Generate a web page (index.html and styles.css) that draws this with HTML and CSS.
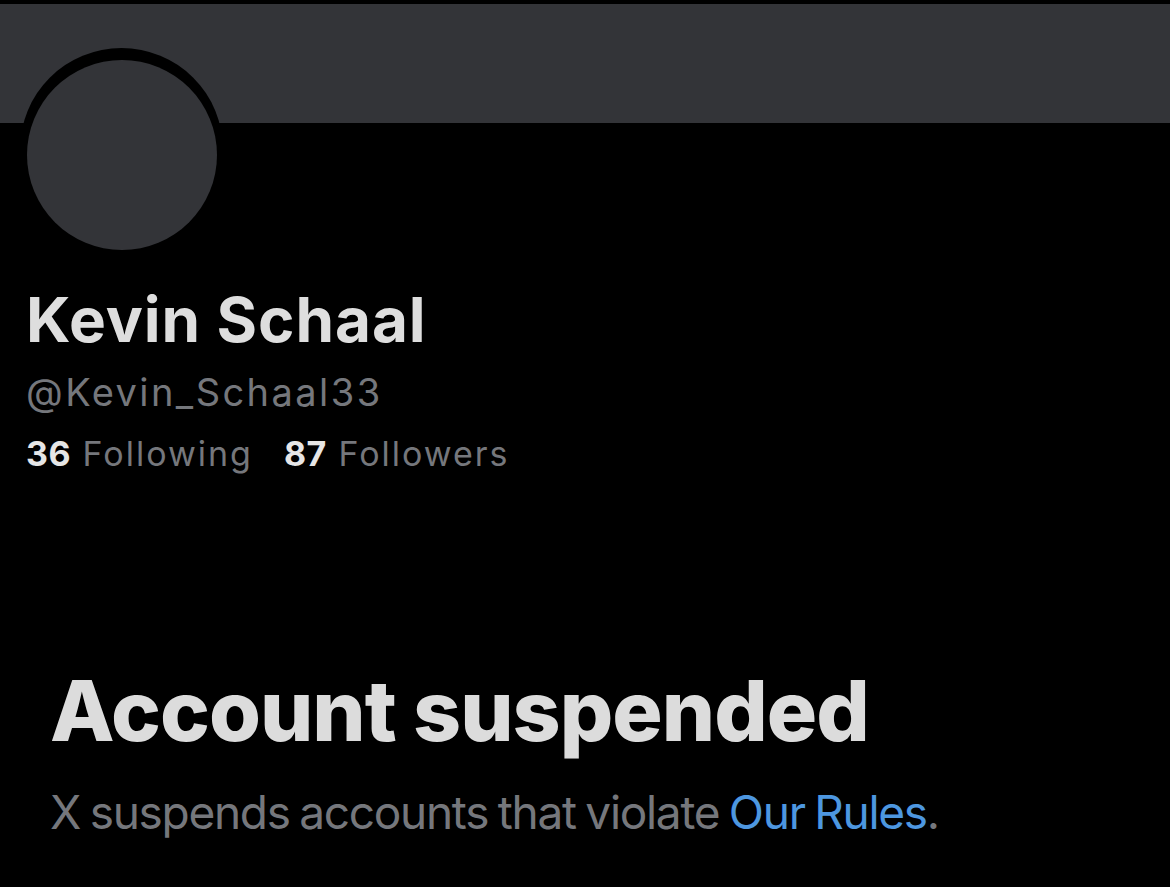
FILE: index.html
```html
<!DOCTYPE html>
<html>
<head>
<meta charset="utf-8">
<link rel="stylesheet" href="styles.css">
</head>
<body>
<div class="page">
  <div class="topstrip"></div>
  <div class="banner"></div>
  <div class="avatar-ring"><div class="avatar"></div></div>
  <div class="profile">
    <div class="name">Kevin Schaal</div>
    <div class="handle">@Kevin_Schaal33</div>
    <div class="stats">
      <span class="stat"><b>36</b> Following</span>
      <span class="stat"><b>87</b> Followers</span>
    </div>
  </div>
  <div class="suspended">
    <div class="title">Account suspended</div>
    <div class="desc">X suspends accounts that violate <a href="#" class="link">Our Rules</a>.</div>
  </div>
</div>
</body>
</html>
```
FILE: styles.css
```css
html, body {
  margin: 0;
  padding: 0;
  background: #000;
}
.page {
  width: 1170px;
  height: 887px;
  overflow: hidden;
  background: #000;
  font-family: Inter, "Noto Sans", sans-serif;
}
.topstrip {
  height: 4px;
  background: #000;
}
.banner {
  height: 119px;
  background: #333438;
}
.avatar-ring {
  margin-top: -75px;
  margin-left: 20px;
  width: 203px;
  height: 203px;
  border-radius: 50%;
  background: #000;
  box-sizing: border-box;
  padding: 12px 0 0 7px;
}
.avatar {
  width: 190px;
  height: 190px;
  border-radius: 50%;
  background: #333438;
}
.profile {
  padding-left: 26px;
  margin-top: 31px;
}
.name {
  font-size: 62px;
  font-weight: 700;
  line-height: 1.21;
  color: #dedede;
  letter-spacing: 0.9px;
}
.handle {
  margin-top: 13px;
  font-size: 38px;
  line-height: 1.21;
  color: #75777c;
  letter-spacing: 2.45px;
}
.stats {
  margin-top: 17px;
  font-size: 34px;
  line-height: 1.21;
  color: #75777c;
  display: flex;
  gap: 31px;
  letter-spacing: 2px;
}
.stats b {
  color: #e6e6e6;
  font-weight: 700;
  letter-spacing: 0.5px;
}
.suspended {
  padding-left: 50px;
  margin-top: 186px;
}
.title {
  font-size: 84px;
  font-weight: 800;
  line-height: 1.21;
  color: #dcdcdc;
  letter-spacing: -1px;
}
.desc {
  margin-top: 23px;
  font-size: 46px;
  line-height: 1.21;
  color: #75777c;
  letter-spacing: -1.3px;
  word-spacing: -2px;
}
.link {
  color: #4d97e0;
  text-decoration: none;
}
```
